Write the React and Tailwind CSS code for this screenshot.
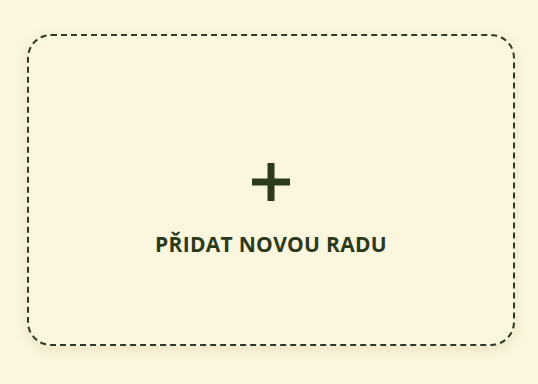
import React from "react";

const App = () => {
  return (
    <div className="min-h-[384px] w-full bg-[#fbf6de] pl-[27px] pr-[23px] pt-[34px] font-['Open_Sans',sans-serif]">
      <button className="flex h-[312px] w-full flex-col items-center justify-start rounded-[24px] border-2 border-dashed border-[#2e3a22] bg-[#fbf6de] pt-[127px] shadow-[0_4px_14px_rgba(120,100,40,0.12)]">
        <svg width="38" height="38" viewBox="0 0 38 38">
          <rect x="0" y="15.5" width="38" height="7" fill="#2b3a1b" />
          <rect x="15.5" y="0" width="7" height="38" fill="#2b3a1b" />
        </svg>
        <span className="mt-[28px] text-[21px] font-bold tracking-[0.3px] text-[#2b3a1b]">
          PŘIDAT NOVOU RADU
        </span>
      </button>
    </div>
  );
};

export default App;
